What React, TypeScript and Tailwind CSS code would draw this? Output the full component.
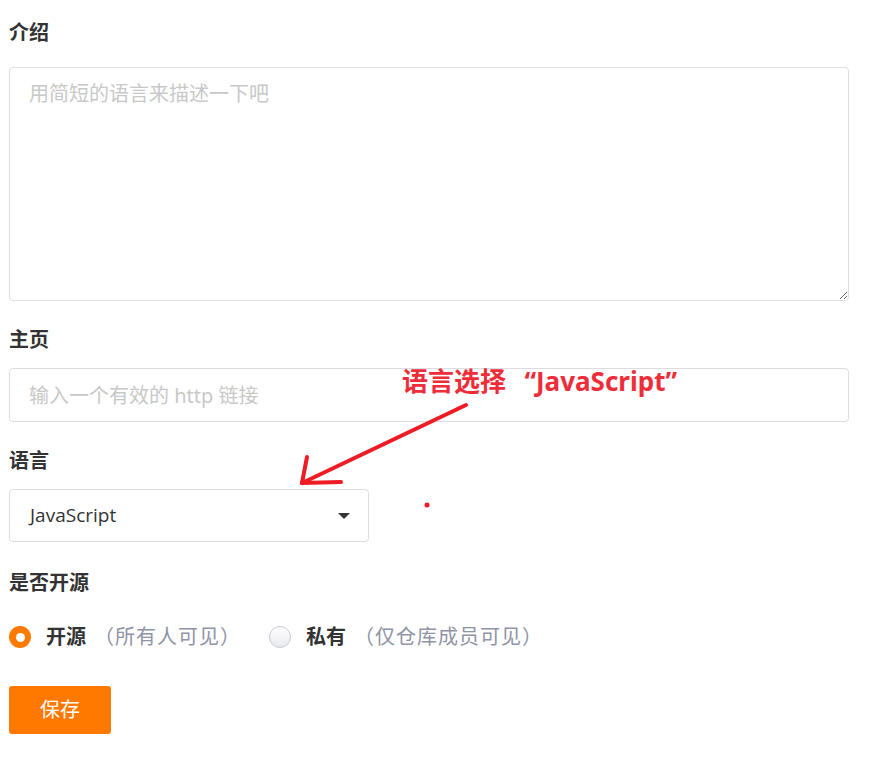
import React from "react";

const FONT = { fontFamily: '"Noto Sans", "Noto Sans CJK SC", sans-serif' };

const Label = ({ children, className = "" }: { children: React.ReactNode; className?: string }) => (
  <div className={`text-[20px] leading-[24px] font-bold text-[#333] ${className}`}>{children}</div>
);

const Radio = ({ checked }: { checked?: boolean }) =>
  checked ? (
    <span className="w-[22px] h-[22px] rounded-full bg-[#ff7a00] flex items-center justify-center shrink-0">
      <span className="w-[9px] h-[9px] rounded-full bg-white" />
    </span>
  ) : (
    <span className="w-[22px] h-[22px] rounded-full border border-[#c8cbd3] bg-gradient-to-b from-white to-[#e9eaee] shrink-0" />
  );

export default function App() {
  const [open, setOpen] = React.useState(true);

  return (
    <div className="relative w-[895px] h-[783px] bg-white" style={FONT}>
      <div className="pl-[9px] pt-[21px] w-[849px]">
        {/* 介绍 */}
        <Label className="mb-[22px]">介绍</Label>
        <textarea
          className="block w-[840px] h-[234px] border border-[#dcdde2] rounded-[4px] px-[19px] py-[12px] text-[20px] leading-[28px] text-[#333] placeholder:text-[#c8c8c8] outline-none"
          placeholder="用简短的语言来描述一下吧"
        />

        {/* 主页 */}
        <Label className="mt-[27px] mb-[16px]">主页</Label>
        <input
          className="block w-[840px] h-[54px] border border-[#dcdde2] rounded-[4px] px-[19px] text-[20px] text-[#333] placeholder:text-[#c8c8c8] outline-none"
          placeholder="输入一个有效的 http 链接"
        />

        {/* 语言 */}
        <Label className="mt-[27px] mb-[16px]">语言</Label>
        <div className="w-[360px] h-[53px] border border-[#dcdde2] rounded-[4px] flex items-center justify-between pl-[20px] pr-[18px]">
          <span className="text-[19px] text-[#333]" style={{ fontFamily: '"Open Sans", "Noto Sans", sans-serif' }}>
            JavaScript
          </span>
          <span className="w-0 h-0 border-l-[6px] border-r-[6px] border-t-[6px] border-l-transparent border-r-transparent border-t-[#333]" />
        </div>

        {/* 是否开源 */}
        <Label className="mt-[29px] mb-[30px]">是否开源</Label>
        <div className="flex items-center h-[24px] text-[20px]">
          <button className="flex items-center" onClick={() => setOpen(true)}>
            <Radio checked={open} />
            <span className="ml-[15px] font-bold text-[#333]">开源</span>
            <span className="ml-[8px] text-[#8f93a6] tracking-[1px]">（所有人可见）</span>
          </button>
          <button className="flex items-center ml-[28px]" onClick={() => setOpen(false)}>
            <Radio checked={!open} />
            <span className="ml-[15px] font-bold text-[#333]">私有</span>
            <span className="ml-[8px] text-[#8f93a6] tracking-[1px]">（仅仓库成员可见）</span>
          </button>
        </div>

        <button className="mt-[37px] w-[102px] h-[48px] rounded-[3px] bg-[#ff7800] text-white text-[20px]">
          保存
        </button>
      </div>

      {/* annotation */}
      <div className="absolute left-[402px] top-[364px] text-[26px] leading-[34px] font-bold text-[#ee2d3a] whitespace-nowrap">
        语言选择<span className="inline-block w-[30px] text-right">“</span>JavaScript
        <span className="inline-block w-[26px] text-left">”</span>
      </div>
      <svg className="absolute left-0 top-0 pointer-events-none" width="895" height="783">
        <g stroke="#ee1c25" strokeWidth="4" strokeLinecap="round" fill="none">
          <line x1="466" y1="405" x2="302" y2="483" />
          <line x1="302" y1="483" x2="307" y2="457" />
          <line x1="302" y1="483" x2="341" y2="482" />
        </g>
        <circle cx="427" cy="505" r="2.5" fill="#ee1c25" />
      </svg>
    </div>
  );
}
